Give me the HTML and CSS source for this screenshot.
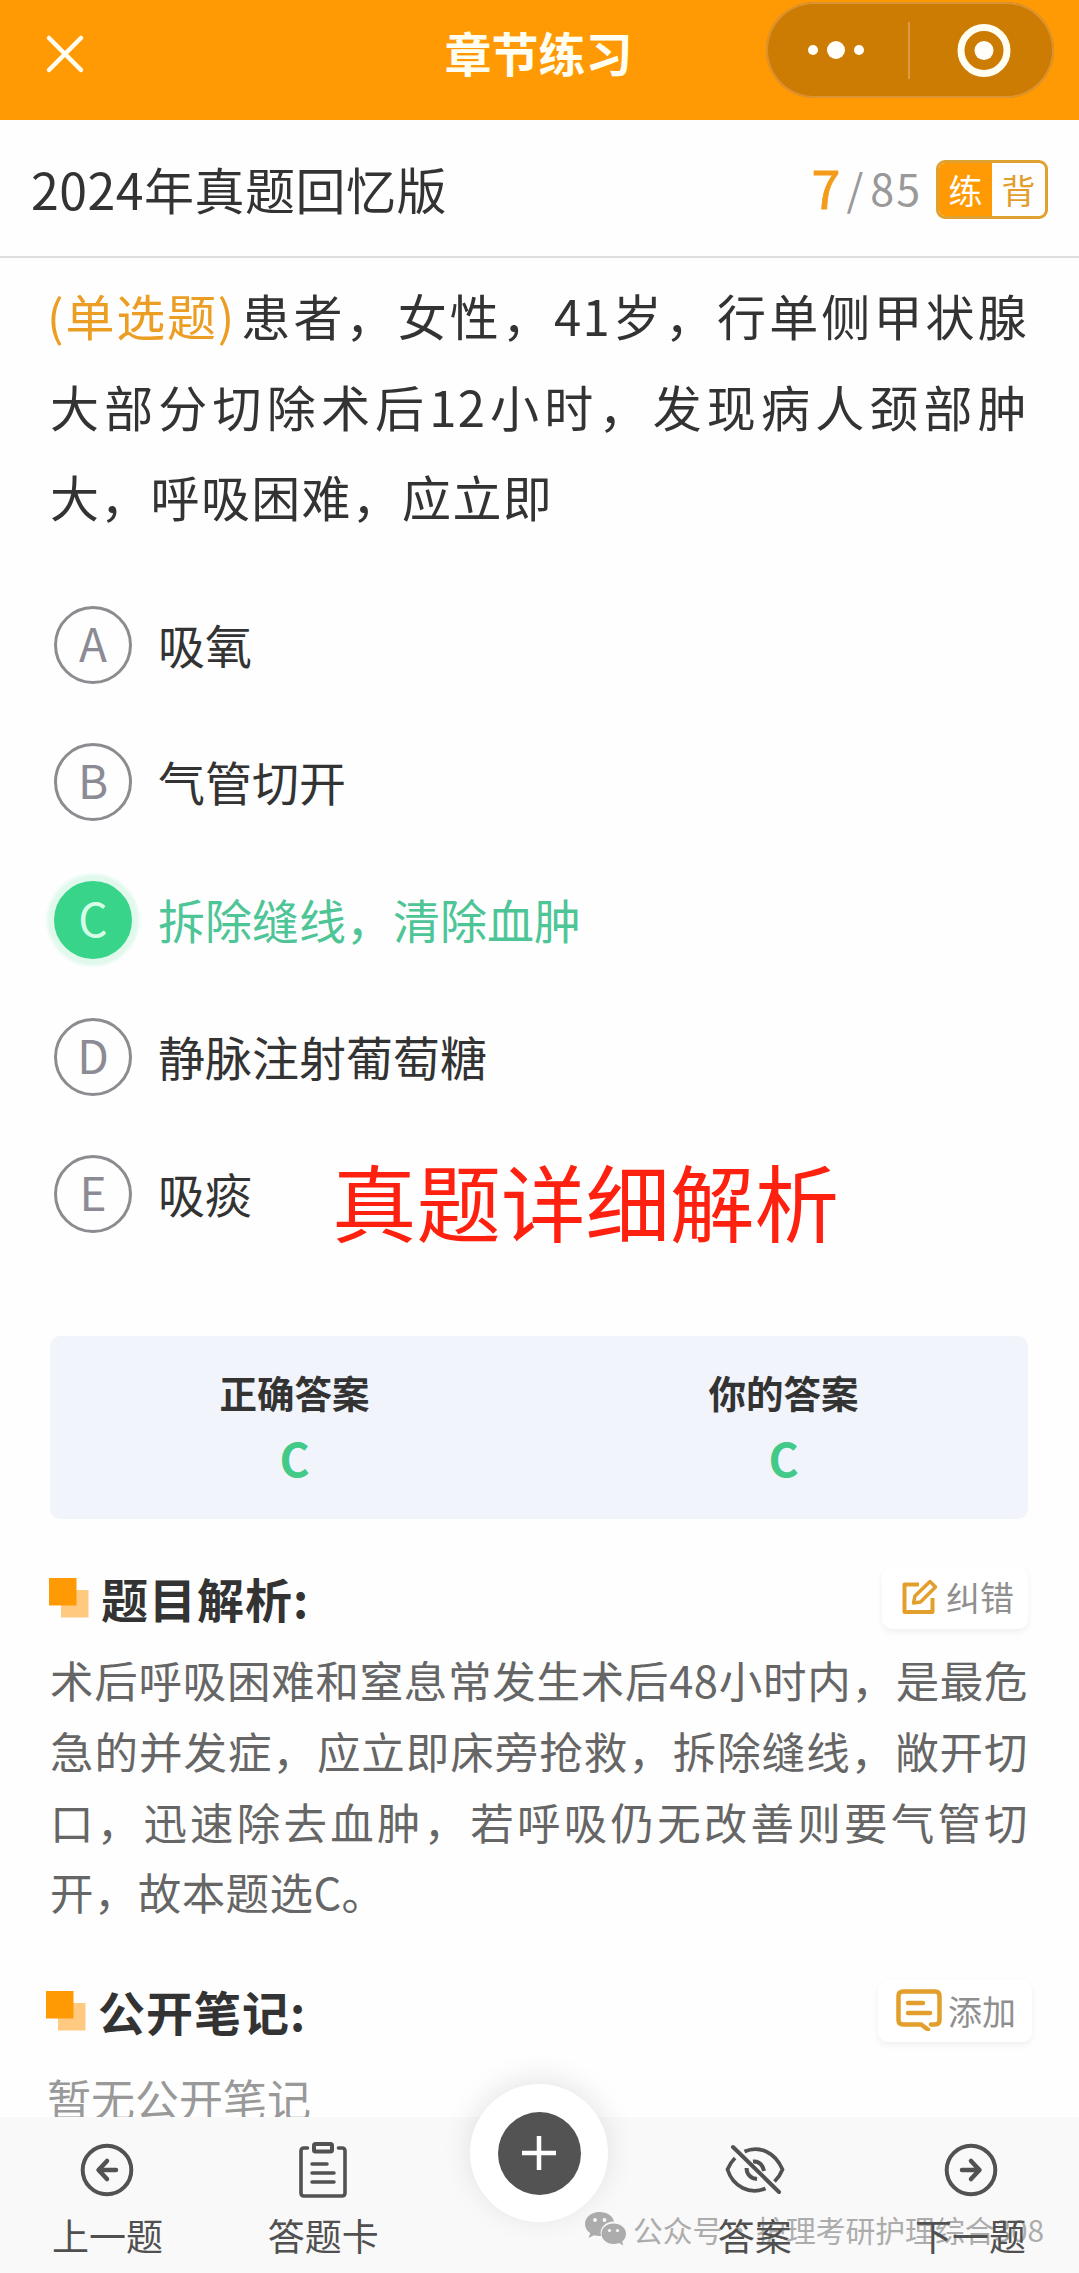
FILE: index.html
```html
<!DOCTYPE html>
<html lang="zh-CN">
<head>
<meta charset="utf-8">
<title>章节练习</title>
<link rel="stylesheet" href="styles.css">
</head>
<body>
<div class="screen">
  <header class="navbar">
    <svg class="close" width="40" height="40" viewBox="0 0 40 40"><path d="M4 4L36 36M36 4L4 36"/></svg>
    <h1 class="navbar-title">章节练习</h1>
    <div class="capsule">
      <svg width="288" height="96" viewBox="0 0 288 96">
        <circle cx="47" cy="48" r="5"/><circle cx="70" cy="48" r="9"/><circle cx="93" cy="48" r="5"/>
        <path class="capsule-line" d="M143 20V77"/>
        <circle class="capsule-ring" cx="218" cy="48.500" r="23"/><circle cx="218" cy="48.500" r="9.500"/>
      </svg>
    </div>
  </header>

  <div class="subbar">
    <div class="paper-name">2024年真题回忆版</div>
    <div class="progress"><span class="current">7</span><span class="slash">/</span><span class="total">85</span></div>
    <div class="mode"><span class="mode-item active">练</span><span class="mode-item">背</span></div>
  </div>

  <main class="content">
    <div class="question">
      <div class="line full"><span class="kind">(单选题)</span>患者，女性，41岁，行单侧甲状腺</div>
      <div class="line full">大部分切除术后12小时，发现病人颈部肿</div>
      <div class="line">大，呼吸困难，应立即</div>
    </div>

    <div class="options">
      <div class="option"><span class="letter">A</span><span>吸氧</span></div>
      <div class="option"><span class="letter">B</span><span>气管切开</span></div>
      <div class="option right"><span class="letter">C</span><span>拆除缝线，清除血肿</span></div>
      <div class="option"><span class="letter">D</span><span>静脉注射葡萄糖</span></div>
      <div class="option"><span class="letter">E</span><span>吸痰</span></div>
      <div class="stamp">真题详细解析</div>
    </div>

    <div class="answers">
      <div class="answer"><span class="answer-label">正确答案</span><b class="answer-value">C</b></div>
      <div class="answer"><span class="answer-label">你的答案</span><b class="answer-value">C</b></div>
    </div>

    <div class="section-head">
      <svg width="40" height="40" viewBox="0 0 40 40"><rect x="12" y="12" width="27.500" height="27.500" fill="#ffca80"/><rect width="27.500" height="27.500" fill="#ff9a04"/></svg>
      <h2>题目解析:</h2>
      <button class="action">
        <svg width="38" height="38" viewBox="0 0 38 38"><path d="M19 6.500H4.500V34H32.500V20" stroke-linejoin="round"/><path d="M13.500 25L15 18L30 3.500L35.500 9L20.500 24Z" stroke-linejoin="round" stroke-width="3.500"/></svg>
        纠错
      </button>
    </div>
    <div class="analysis">
      <div class="line full">术后呼吸困难和窒息常发生术后48小时内，是最危</div>
      <div class="line full">急的并发症，应立即床旁抢救，拆除缝线，敞开切</div>
      <div class="line full">口，迅速除去血肿，若呼吸仍无改善则要气管切</div>
      <div class="line">开，故本题选C。</div>
    </div>

    <div class="section-head notes">
      <svg width="40" height="40" viewBox="0 0 40 40"><rect x="12" y="12" width="27.500" height="27.500" fill="#ffca80"/><rect width="27.500" height="27.500" fill="#ff9a04"/></svg>
      <h2>公开笔记:</h2>
      <button class="action add">
        <svg width="46" height="42" viewBox="0 0 46 42"><path d="M35 35.500H39Q43.500 35.500 43.500 31V7Q43.500 2.500 39 2.500H7Q2.500 2.500 2.500 7V31Q2.500 35.500 7 35.500H25L32 40.500M12 14H27M12 24H34" stroke-linecap="round"/></svg>
        添加
      </button>
    </div>
    <div class="empty">暂无公开笔记</div>
  </main>

  <nav class="tabbar">
    <div class="watermark">
      <svg width="41" height="34" viewBox="0 0 41 34">
        <path d="M14.500 0C6.500 0 0 5.300 0 12C0 15.800 2 19 5.200 21.200L3.500 26L9 23.200Q12 24.200 16 24C14 16.500 20 9.500 29 9.500C28 4 22 0 14.500 0Z"/>
        <path d="M28.500 11.500C21.500 11.500 16.500 16 16.500 21.800S22 32 28.500 32Q31.500 32 34 31L38.300 33.500L37.200 29.500C39.500 27.700 41 25 41 21.800C41 16 35.500 11.500 28.500 11.500Z"/>
        <g fill="#f9f9f9"><circle cx="10" cy="8" r="1.900"/><circle cx="19.500" cy="8" r="1.900"/><circle cx="24.500" cy="18.500" r="1.600"/><circle cx="32.500" cy="18.500" r="1.600"/></g>
      </svg>
      <span>公众号 · 护理考研护理综合308</span>
    </div>
    <div class="tab">
      <svg width="60" height="60" viewBox="0 0 60 60"><circle cx="30" cy="30" r="24.300"/><path class="arrow" d="M39 30H22M30 21L21.500 30L30 39"/></svg>
      <span>上一题</span>
    </div>
    <div class="tab">
      <svg width="60" height="60" viewBox="0 0 60 60"><path d="M14.500 8H11Q8 8 8 11V53Q8 56 11 56H49Q52 56 52 53V11Q52 8 49 8H45.500" stroke-width="3.600" stroke-linecap="round"/><rect x="21" y="4" width="18" height="7.500" rx="1.500"/><path d="M19 24H34M19 33H41M19 42H41" stroke-width="3.500" stroke-linecap="round"/></svg>
      <span>答题卡</span>
    </div>
    <div class="tab"></div>
    <div class="tab">
      <svg width="60" height="60" viewBox="0 0 60 60"><path d="M19.500 11.500C34 5 50 12 57.500 29.500Q55 36 49.500 41.500M40.500 48.500C25 55 8 47 2.500 29.500Q5 23 10 18" stroke-width="3.700"/><path d="M28 21.500Q37 21 39 31M21.500 28Q22 38 32 39" stroke-width="4"/><path d="M8 7L54 52" stroke-width="4" stroke-linecap="round"/></svg>
      <span>答案</span>
    </div>
    <div class="tab">
      <svg width="60" height="60" viewBox="0 0 60 60"><circle cx="30" cy="30" r="24.300"/><path class="arrow" d="M21 30H38M30 21L38.500 30L30 39"/></svg>
      <span>下一题</span>
    </div>
    <div class="fab"><div class="fab-core"><svg width="34" height="34" viewBox="0 0 34 34"><path d="M17 0V34M0 17H34"/></svg></div></div>
  </nav>
</div>
</body>
</html>
```
FILE: styles.css
```css
* { box-sizing: border-box; }

body {
  margin: 0;
  background: #fff;
  color: #333;
  font-family: "Noto Sans CJK SC", sans-serif;
}

h1, h2 { margin: 0; }

svg { display: block; flex: none; }

.screen {
  display: flex;
  flex-direction: column;
  width: 1079px;
  height: 2273px;
  overflow: hidden;
  background: #fefefe;
}

/* top bar */
.navbar {
  display: grid;
  grid-template-columns: 1fr auto 1fr;
  flex: none;
  height: 120px;
  padding: 2px 25px 0 45px;
  background: #ff9a04;
  color: #fffef2;
}

.close {
  margin-top: 31.5px;
  fill: none;
  stroke: currentColor;
  stroke-width: 4.5;
  stroke-linecap: round;
}

.navbar-title {
  margin-left: -22px;
  margin-top: 15px;
  font-size: 47px;
  line-height: 70px;
  font-weight: 700;
}

.capsule {
  justify-self: end;
  width: 288px;
  height: 96px;
  border-radius: 48px;
  background: #cc7b03;
  box-shadow: inset 0 0 0 2px #dd9430;
}

.capsule svg { fill: #fffefa; }
.capsule .capsule-line { stroke: #dd9a45; stroke-width: 2; }
.capsule .capsule-ring { fill: none; stroke: #fffef0; stroke-width: 7; }

/* paper name and progress */
.subbar {
  display: flex;
  align-items: center;
  flex: none;
  height: 138px;
  padding: 0 31px 0 31px;
  border-bottom: 2px solid #dedee0;
}

.paper-name {
  flex: 1;
  font-size: 50px;
  line-height: 70px;
  letter-spacing: .5px;
}

.progress {
  display: flex;
  align-items: center;
  margin-right: 14px;
  margin-top: -3px;
  color: #999;
  font-size: 43px;
  line-height: 70px;
}

.current {
  color: #f39c1a;
  font-size: 52px;
  -webkit-text-stroke: .8px #f39c1a;
}

.slash { margin: 0 7px 0 6px; }
.total { letter-spacing: 2px; }

.mode {
  display: flex;
  width: 112px;
  height: 59px;
  margin-top: 2px;
  border: 3px solid #dfa12f;
  border-radius: 9px;
  overflow: hidden;
}

.mode-item {
  flex: 1;
  color: #e29d2b;
  font-size: 34px;
  line-height: 53px;
  text-align: center;
}

.mode-item.active { background: #ff9a04; color: #fff; }

/* scrolling content */
.content {
  flex: 1;
  min-height: 0;
  padding: 12px 51px 0 50px;
  overflow: hidden;
}

.line { white-space: nowrap; }
.line.full { text-align: justify; text-align-last: justify; }

.question {
  font-size: 49px;
  line-height: 90.5px;
  letter-spacing: 1.3px;
}

.kind { margin: 0 5px 0 -3px; color: #ec9d23; letter-spacing: 0; }

.options { position: relative; padding-top: 35px; }

.option {
  display: flex;
  align-items: center;
  gap: 26px;
  height: 137.3px;
  padding-left: 4px;
  font-size: 47px;
}

.option span:last-child { margin-top: -3px; }

.letter {
  width: 78px;
  height: 78px;
  border: 3px solid #8b8b90;
  border-radius: 50%;
  color: #8c8b95;
  font-size: 46px;
  line-height: 66px;
  text-align: center;
}

.right { color: #4ec596; }

.right .letter {
  border-color: #38d489;
  background: #38d489;
  color: #d4ffe6;
  box-shadow: 0 0 3px 7px #e1f9ed;
}

.stamp {
  position: absolute;
  left: 282px;
  bottom: 4px;
  color: #fe2110;
  font-size: 84.5px;
  line-height: 120px;
}

.answers {
  display: grid;
  grid-template-columns: 1fr 1fr;
  height: 183px;
  margin-top: 73px;
  border-radius: 10px;
  background: #f1f4fb;
}

.answer {
  display: flex;
  flex-direction: column;
  align-items: center;
  padding-top: 30px;
}

.answer-label { font-size: 37.5px; line-height: 52px; font-weight: 700; }
.answer-value { margin-top: 9px; color: #43ca89; font-size: 46px; line-height: 60px; }

.section-head {
  display: flex;
  align-items: center;
  height: 64px;
  margin: 47px 0 0 -1px;
}

.section-head h2 {
  flex: 1;
  margin-left: 12px;
  font-size: 47px;
  line-height: 64px;
  font-weight: 700;
  letter-spacing: 1px;
}

.action {
  display: flex;
  align-items: center;
  gap: 8px;
  height: 62px;
  padding: 0 14px 2px 18px;
  border: 0;
  border-radius: 10px;
  background: #fff;
  box-shadow: 0 3px 7px rgba(0, 0, 0, .06);
  color: #8f8f8f;
  font: 34px "Noto Sans CJK SC", sans-serif;
}

.action svg { fill: none; stroke: #e39f2c; stroke-width: 4; }

.analysis {
  margin-top: 15px;
  color: #666;
  font-size: 43.5px;
  line-height: 70.8px;
  letter-spacing: .4px;
}

.section-head.notes { margin: 51px -4px 0 -4px; }
.action.add { gap: 6px; padding: 0 16px 2px 18px; }
.action.add svg { stroke-width: 4.5; }

.empty {
  margin: 20px 0 0 -3px;
  color: #999;
  font-size: 44px;
  line-height: 70px;
}

/* bottom bar */
.tabbar {
  position: relative;
  display: grid;
  grid-template-columns: repeat(5, 1fr);
  flex: none;
  height: 156px;
  background: #f9f9f9;
}

.tab {
  z-index: 2;
  display: flex;
  flex-direction: column;
  align-items: center;
  margin-left: -1px;
  padding-top: 23px;
  color: #505050;
  font-size: 37px;
  line-height: 52px;
}

.tab svg { margin-bottom: 9px; fill: none; stroke: #525252; stroke-width: 4; }
.tab .arrow { stroke-width: 4.5; stroke-linecap: round; stroke-linejoin: round; }

.fab {
  position: absolute;
  z-index: 1;
  left: 470px;
  top: -33px;
  display: grid;
  place-items: center;
  width: 138px;
  height: 138px;
  border-radius: 50%;
  background: #fff;
  box-shadow: 0 -5px 30px rgba(0, 0, 0, .1);
}

.fab-core {
  display: grid;
  place-items: center;
  width: 83px;
  height: 83px;
  border-radius: 50%;
  background: #535353;
}

.fab-core svg { stroke: #fff; stroke-width: 4.5; }

.watermark {
  position: absolute;
  z-index: 1;
  left: 585px;
  top: 90px;
  display: flex;
  align-items: center;
  gap: 7px;
  color: #acacac;
  font-size: 29.8px;
  line-height: 44px;
  word-spacing: -4.7px;
  white-space: nowrap;
}

.watermark svg { fill: #acacac; }
```
